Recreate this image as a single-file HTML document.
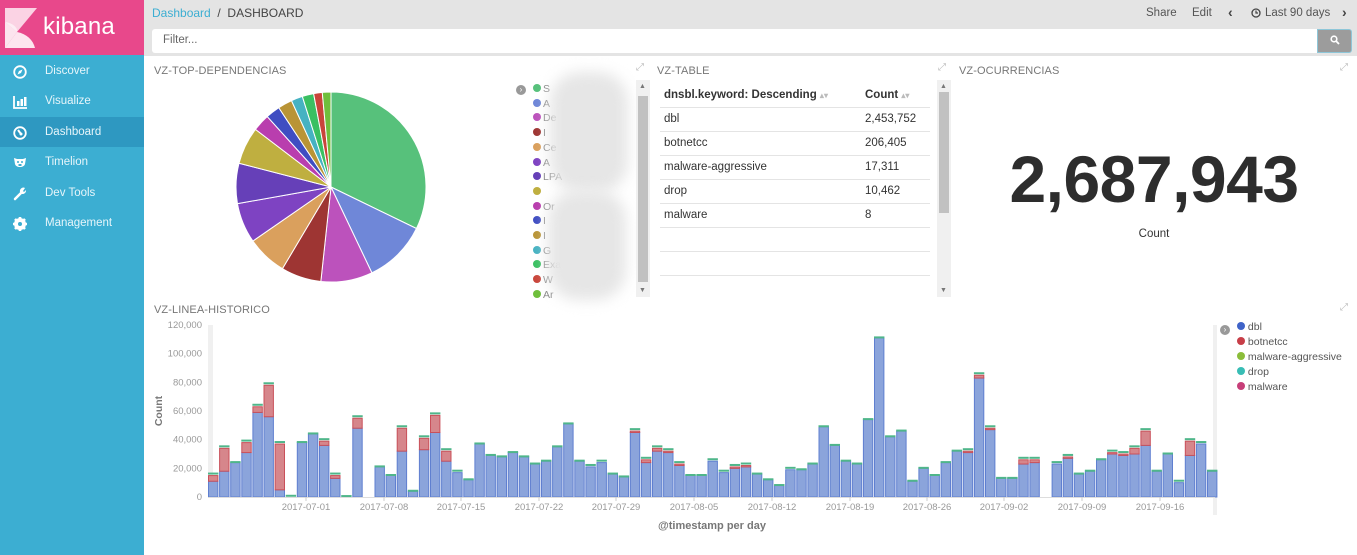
<!DOCTYPE html>
<html><head><meta charset="utf-8">
<style>
*{box-sizing:border-box;margin:0;padding:0}
body{width:1357px;height:555px;overflow:hidden;background:#fff;font-family:"Liberation Sans",sans-serif;position:relative;color:#444}
.a{position:absolute}
#side{left:0;top:0;width:144px;height:555px;background:#3caed2}
#logo{left:0;top:0;width:144px;height:55px;background:#e8488b}
.nav{left:0;width:144px;height:30px;color:#e6f5fa;font-size:11.5px;line-height:31px;padding-left:45px}
.nav svg{position:absolute;left:13px;top:9px}
#top{left:144px;top:0;width:1213px;height:56px;background:#e4e4e4}
.title{font-size:11px;color:#777;letter-spacing:.1px}
table{border-collapse:collapse;font-size:11.5px;color:#333}
td,th{text-align:left;height:24px;border-bottom:1px solid #e4e4e4;padding-left:4px}
</style></head><body>
<div id="side" class="a"></div>
<div id="logo" class="a">
<svg class="a" style="left:5px;top:8px" width="32" height="40" viewBox="0 0 32 40"><path d="M0 0H32L12 24L0 14Z" fill="#fbd3e4"/><path d="M0 14L12 24L0 40Z" fill="#f8bcd5"/><path d="M0 40L12 24C22 26 28 32 30 40Z" fill="#fde5ef"/><path d="M0 14C8 15 13 20 12 24L0 40Z" fill="#fff" opacity=".6"/></svg>
<div class="a" style="left:43px;top:13px;font-size:24px;color:#fff;letter-spacing:.2px">kibana</div>
</div>
<div class="a nav" style="top:56px"><svg width="14" height="14" viewBox="0 0 14 14"><circle cx="7" cy="7" r="5.8" fill="none" stroke="#fff" stroke-width="1.8"/><path d="M9.5 4.5L6 6L4.5 9.5L8 8Z" fill="#fff"/></svg>Discover</div>
<div class="a nav" style="top:86px"><svg width="14" height="14" viewBox="0 0 14 14"><path d="M1 1V13H14" fill="none" stroke="#fff" stroke-width="1.8"/><rect x="4" y="6" width="2.5" height="5" fill="#fff"/><rect x="7.5" y="4" width="2.5" height="7" fill="#fff"/><rect x="11" y="2" width="2.5" height="9" fill="#fff"/></svg>Visualize</div>
<div class="a nav" style="top:117px;background:#2e98c1"><svg width="14" height="14" viewBox="0 0 14 14"><circle cx="7" cy="7" r="5.8" fill="none" stroke="#fff" stroke-width="1.8"/><path d="M5 4L8 8" stroke="#fff" stroke-width="2"/><circle cx="8" cy="8" r="1.5" fill="#fff"/></svg>Dashboard</div>
<div class="a nav" style="top:147px"><svg width="14" height="14" viewBox="0 0 14 14"><path d="M1 2L4 3H10L13 2L12 8C11 12 3 12 2 8Z" fill="#fff"/><circle cx="5" cy="6" r="1" fill="#3caed2"/><circle cx="9" cy="6" r="1" fill="#3caed2"/><rect x="5.5" y="8" width="3" height="2" fill="#3caed2"/></svg>Timelion</div>
<div class="a nav" style="top:178px"><svg width="14" height="14" viewBox="0 0 14 14"><path d="M2 12L8 6" stroke="#fff" stroke-width="2.5" stroke-linecap="round"/><path d="M7 5A3.5 3.5 0 0 1 12 1L10 4L11 5L13 3A3.5 3.5 0 0 1 9 7Z" fill="#fff"/></svg>Dev Tools</div>
<div class="a nav" style="top:208px"><svg width="14" height="14" viewBox="0 0 14 14"><circle cx="7" cy="7" r="4.5" fill="none" stroke="#fff" stroke-width="3"/><g stroke="#fff" stroke-width="2.6"><path d="M7 0V14M0 7H14M2 2L12 12M12 2L2 12"/></g><circle cx="7" cy="7" r="2" fill="#3caed2"/></svg>Management</div>

<div id="top" class="a"></div>
<div class="a" style="left:152px;top:6px;font-size:12px"><span style="color:#3caed2">Dashboard</span> <span style="color:#444">&nbsp;/&nbsp; DASHBOARD</span></div>
<div class="a" style="left:1146px;top:7px;font-size:11.5px;color:#555">Share</div>
<div class="a" style="left:1192px;top:7px;font-size:11.5px;color:#555">Edit</div>
<div class="a" style="left:1228px;top:4px;font-size:14px;color:#444;font-weight:bold">&#x2039;</div>
<svg class="a" style="left:1251px;top:8px" width="10" height="10" viewBox="0 0 10 10"><circle cx="5" cy="5" r="4" fill="none" stroke="#444" stroke-width="1.3"/><path d="M5 2.5V5H7" fill="none" stroke="#444" stroke-width="1.2"/></svg>
<div class="a" style="left:1265px;top:7px;font-size:11.5px;color:#555">Last 90 days</div>
<div class="a" style="left:1342px;top:4px;font-size:14px;color:#444;font-weight:bold">&#x203A;</div>
<div class="a" style="left:152px;top:29px;width:1166px;height:24px;background:#fff;border-radius:3px 0 0 3px"></div>
<div class="a" style="left:163px;top:34px;font-size:11.5px;color:#666">Filter...</div>
<div class="a" style="left:1317px;top:29px;width:35px;height:24px;background:#9c9c9c;border:1px solid #8ec6d8;border-radius:0 3px 3px 0"></div>
<svg class="a" style="left:1330px;top:35px" width="10" height="10" viewBox="0 0 10 10"><circle cx="4" cy="4" r="2.8" fill="none" stroke="#fff" stroke-width="1.6"/><path d="M6 6L9 9" stroke="#fff" stroke-width="1.8"/></svg>

<div class="a title" style="left:154px;top:65px">VZ-TOP-DEPENDENCIAS</div>
<div class="a title" style="left:657px;top:65px">VZ-TABLE</div>
<div class="a title" style="left:959px;top:65px">VZ-OCURRENCIAS</div>
<div class="a title" style="left:154px;top:304px">VZ-LINEA-HISTORICO</div>
<div class="a" style="left:636px;top:62px;font-size:10px;color:#bbb">&#x2922;</div>
<div class="a" style="left:938px;top:62px;font-size:10px;color:#bbb">&#x2922;</div>
<div class="a" style="left:1340px;top:62px;font-size:10px;color:#bbb">&#x2922;</div>
<div class="a" style="left:1340px;top:302px;font-size:10px;color:#bbb">&#x2922;</div>

<svg id="pie" class="a" style="left:230px;top:86px" width="202" height="202" viewBox="0 0 202 202"></svg>
<div class="a" style="left:516px;top:85px;width:10px;height:10px;border-radius:50%;background:#999;color:#fff;font-size:8px;line-height:10px;text-align:center">&#x203A;</div>
<div id="leg" class="a" style="left:533px;top:84px"></div>
<div class="a" style="left:543px;top:82px;font-size:10.5px;color:#888;line-height:14.7px;width:90px;overflow:hidden;white-space:nowrap">S<br>A<br>De<br>I<br>Ce<br>A<br>LPA<br>&nbsp;<br>Or<br>I<br>I<br>G<br>Exa&nbsp;&nbsp;&nbsp;&nbsp;&nbsp;&nbsp;DB<br>W<br>Ar</div>
<div class="a" style="left:550px;top:72px;width:78px;height:120px;background:#e6e6e6;filter:blur(7px);border-radius:30px"></div>
<div class="a" style="left:548px;top:190px;width:78px;height:110px;background:#e6e6e6;filter:blur(7px);border-radius:30px"></div>
<div class="a" style="left:636px;top:80px;width:14px;height:217px;background:#f0f0f0"></div>
<div class="a" style="left:638px;top:96px;width:10px;height:186px;background:#c1c1c1"></div>
<div class="a" style="left:639px;top:83px;font-size:7px;color:#777">&#x25B2;</div>
<div class="a" style="left:639px;top:287px;font-size:7px;color:#777">&#x25BC;</div>

<table class="a" style="left:660px;top:83px;width:270px">
<tr><th style="width:201px">dnsbl.keyword: Descending <span style="color:#bbb;font-size:8px">&#x25B4;&#x25BE;</span></th><th>Count <span style="color:#bbb;font-size:8px">&#x25B4;&#x25BE;</span></th></tr>
<tr><td>dbl</td><td>2,453,752</td></tr>
<tr><td>botnetcc</td><td>206,405</td></tr>
<tr><td>malware-aggressive</td><td>17,311</td></tr>
<tr><td>drop</td><td>10,462</td></tr>
<tr><td>malware</td><td>8</td></tr>
<tr><td></td><td></td></tr>
<tr><td></td><td></td></tr>
</table>
<div class="a" style="left:937px;top:80px;width:14px;height:217px;background:#f0f0f0"></div>
<div class="a" style="left:939px;top:92px;width:10px;height:121px;background:#c1c1c1"></div>
<div class="a" style="left:940px;top:83px;font-size:7px;color:#777">&#x25B2;</div>
<div class="a" style="left:940px;top:287px;font-size:7px;color:#777">&#x25BC;</div>

<div class="a" style="left:954px;top:141px;width:400px;text-align:center;font-size:66px;font-weight:bold;color:#2d2d2d;letter-spacing:-0.5px">2,687,943</div>
<div class="a" style="left:954px;top:228px;width:400px;text-align:center;font-size:11.5px;color:#333">Count</div>

<svg id="chart" class="a" style="left:144px;top:315px" width="1213" height="230"></svg>
<div class="a" style="left:1220px;top:325px;width:10px;height:10px;border-radius:50%;background:#999;color:#fff;font-size:8px;line-height:10px;text-align:center">&#x203A;</div>
<div class="a" style="left:1237px;top:320px;font-size:10.5px;color:#555;line-height:15px">
<div><span style="display:inline-block;width:8px;height:8px;border-radius:50%;background:#3f63c8"></span> dbl</div>
<div><span style="display:inline-block;width:8px;height:8px;border-radius:50%;background:#c73e48"></span> botnetcc</div>
<div><span style="display:inline-block;width:8px;height:8px;border-radius:50%;background:#8bbd3a"></span> malware-aggressive</div>
<div><span style="display:inline-block;width:8px;height:8px;border-radius:50%;background:#38bdb5"></span> drop</div>
<div><span style="display:inline-block;width:8px;height:8px;border-radius:50%;background:#c73f79"></span> malware</div>
</div>
<script>
var NS="http://www.w3.org/2000/svg";
function el(p,n,a,t){var e=document.createElementNS(NS,n);for(var k in a)e.setAttribute(k,a[k]);if(t!=null)e.textContent=t;p.appendChild(e);return e;}
var fr=[.33,.11,.09,.07,.07,.07,.07,.065,.03,.025,.025,.02,.02,.015,.015];
var cols=["#57c17b","#6f87d8","#bc52bc","#9e3533","#daa05d","#7e43c2","#6640b8","#bfaf40","#b93eae","#3f4dc2","#b99436","#46b2c2","#3ac062","#c9453a","#6fbf3c"];
var s=fr.reduce(function(a,b){return a+b},0),pie=document.getElementById("pie"),a0=-Math.PI/2,R=95,c=101;
fr.forEach(function(f,i){var a1=a0+f/s*2*Math.PI;var x0=c+R*Math.cos(a0),y0=c+R*Math.sin(a0),x1=c+R*Math.cos(a1),y1=c+R*Math.sin(a1);
el(pie,"path",{d:"M"+c+" "+c+"L"+x0+" "+y0+"A"+R+" "+R+" 0 "+((a1-a0)>Math.PI?1:0)+" 1 "+x1+" "+y1+"Z",fill:cols[i],stroke:"#fff","stroke-width":1});a0=a1;});
var leg=document.getElementById("leg");
cols.forEach(function(cl,i){var d=document.createElement("div");d.style.cssText="position:absolute;left:0;top:"+(i*14.7)+"px;width:8px;height:8px;border-radius:50%;background:"+cl;leg.appendChild(d);});
var ch=document.getElementById("chart"),ox=144,oy=315,z=497,k=172/120;
el(ch,"rect",{x:208-ox,y:325-oy,width:5,height:172,fill:"#f0f0f0"});
el(ch,"rect",{x:1213-ox,y:325-oy,width:4,height:190,fill:"#f0f0f0"});
["0","20,000","40,000","60,000","80,000","100,000","120,000"].forEach(function(l,i){el(ch,"text",{x:202-ox,y:z-i*20*k+3-oy,"text-anchor":"end","font-size":"9.5","fill":"#999","font-family":"Liberation Sans"},l);});
el(ch,"text",{x:0,y:0,transform:"translate("+(162-ox)+","+(411-oy)+") rotate(-90)","text-anchor":"middle","font-size":"10.5","font-weight":"bold","fill":"#777","font-family":"Liberation Sans"},"Count");
var D=[[16,11],[35,18],[24,24],[39,31],[64,59],[79,56],[38,5],[0.5,0],[38,38],[44,44],[40,36],[16,13],[0.3,0],[56,48],null,
[21,21],[15,15],[49,32],[4,4],[42,33],[58,45],[33,25],[18,17],[12,12],[37,37],[29,29],[28,28],[31,31],[28,28],[23,23],[25,25],[35,35],[51,51],[25,25],[22,21],[25,24],[16,16],[14,14],[47,45],[27,24],[35,32],[33,31],
[24,22],[15,15],[15,15],[26,25],[18,17],[22,20],[23,21],[16,16],[12,12],[8,8],[20,19],[19,19],[23,23],[49,49],[36,36],[25,25],[23,23],[54,54],[111,111],[42,42],[46,46],[11,11],[20,20],[15,15],[24,24],[32,32],[33,31],[86,83],[49,47],[13,13],[13,13],[27,23],[27,24],null,
[24,23],[29,27],[16,16],[18,18],[26,26],[32,30],[31,29],[35,30],[47,36],[18,18],[30,30],[11,10],[40,29],[38,37],[18,18]];
D.forEach(function(d,i){if(!d)return;var x=208+i*11.1-ox,w=10.4;var hb=d[1]*k,ht=d[0]*k;
if(hb>0)el(ch,"rect",{x:x+.5,y:z-hb-oy,width:w-1,height:hb,fill:"#8ba4db",stroke:"#5f7fd0","stroke-width":1});
if(ht-hb>1)el(ch,"rect",{x:x+.5,y:z-ht-oy+1.5,width:w-1,height:ht-hb-1.5,fill:"#d6868b",stroke:"#c9505a","stroke-width":1});
el(ch,"rect",{x:x,y:z-ht-oy-1.5,width:w,height:2,fill:"#4fb68a"});});
el(ch,"line",{x1:208-ox,y1:z-oy+.5,x2:1215-ox,y2:z-oy+.5,stroke:"#ddd"});
[["2017-07-01",306],["2017-07-08",384],["2017-07-15",461],["2017-07-22",539],["2017-07-29",616],["2017-08-05",694],["2017-08-12",772],["2017-08-19",850],["2017-08-26",927],["2017-09-02",1004],["2017-09-09",1082],["2017-09-16",1160]].forEach(function(t){
el(ch,"line",{x1:t[1]-ox,y1:z-oy,x2:t[1]-ox,y2:z-oy+4,stroke:"#ccc"});
el(ch,"text",{x:t[1]-ox,y:510-oy,"text-anchor":"middle","font-size":"9.5","fill":"#999","font-family":"Liberation Sans"},t[0]);});
el(ch,"text",{x:712-ox,y:529-oy,"text-anchor":"middle","font-size":"11","font-weight":"bold","fill":"#777","font-family":"Liberation Sans"},"@timestamp per day");
</script>
</body></html>
